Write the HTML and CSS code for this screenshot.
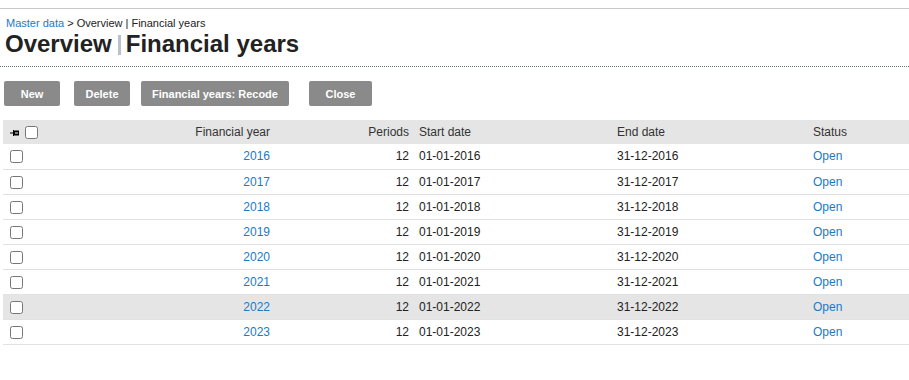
FILE: index.html
```html
<!DOCTYPE html>
<html lang="en">
<head>
<meta charset="utf-8">
<title>Overview | Financial years</title>
<link rel="stylesheet" href="styles.css">
</head>
<body>
<div class="topline"></div>
<header class="page-head">
  <div class="crumbs"><a href="#">Master data</a> &gt; Overview | Financial years</div>
  <h1 class="title">Overview<span class="sep"></span>Financial years</h1>
</header>
<div class="toolbar">
  <button class="btn btn-new">New</button>
  <button class="btn btn-delete">Delete</button>
  <button class="btn btn-recode">Financial years: Recode</button>
  <button class="btn btn-close">Close</button>
</div>
<table class="grid">
  <colgroup>
    <col class="c-check">
    <col class="c-year">
    <col class="c-periods">
    <col class="c-start">
    <col class="c-end">
    <col class="c-status">
  </colgroup>
  <thead>
    <tr>
      <th class="check"><svg class="pin" width="9" height="8" viewBox="0 0 9 8"><path d="M0 4h3M3.5 1v6" stroke="#000" stroke-width="1" fill="none"/><rect x="4" y="1.5" width="5" height="5" fill="#000"/><rect x="5" y="3.5" width="3" height="1" fill="#fff"/></svg><input type="checkbox" class="cb"></th>
      <th class="num">Financial year</th>
      <th class="num">Periods</th>
      <th>Start date</th>
      <th>End date</th>
      <th>Status</th>
    </tr>
  </thead>
  <tbody>
    <tr><td class="check"><input type="checkbox" class="cb"></td><td class="num"><a href="#">2016</a></td><td class="num">12</td><td>01-01-2016</td><td>31-12-2016</td><td><a href="#">Open</a></td></tr>
    <tr><td class="check"><input type="checkbox" class="cb"></td><td class="num"><a href="#">2017</a></td><td class="num">12</td><td>01-01-2017</td><td>31-12-2017</td><td><a href="#">Open</a></td></tr>
    <tr><td class="check"><input type="checkbox" class="cb"></td><td class="num"><a href="#">2018</a></td><td class="num">12</td><td>01-01-2018</td><td>31-12-2018</td><td><a href="#">Open</a></td></tr>
    <tr><td class="check"><input type="checkbox" class="cb"></td><td class="num"><a href="#">2019</a></td><td class="num">12</td><td>01-01-2019</td><td>31-12-2019</td><td><a href="#">Open</a></td></tr>
    <tr><td class="check"><input type="checkbox" class="cb"></td><td class="num"><a href="#">2020</a></td><td class="num">12</td><td>01-01-2020</td><td>31-12-2020</td><td><a href="#">Open</a></td></tr>
    <tr><td class="check"><input type="checkbox" class="cb"></td><td class="num"><a href="#">2021</a></td><td class="num">12</td><td>01-01-2021</td><td>31-12-2021</td><td><a href="#">Open</a></td></tr>
    <tr class="hover"><td class="check"><input type="checkbox" class="cb"></td><td class="num"><a href="#">2022</a></td><td class="num">12</td><td>01-01-2022</td><td>31-12-2022</td><td><a href="#">Open</a></td></tr>
    <tr><td class="check"><input type="checkbox" class="cb"></td><td class="num"><a href="#">2023</a></td><td class="num">12</td><td>01-01-2023</td><td>31-12-2023</td><td><a href="#">Open</a></td></tr>
  </tbody>
</table>
</body>
</html>
```
FILE: styles.css
```css
* { box-sizing: border-box; }
html, body { margin: 0; padding: 0; background: #fff; }
body {
  padding-top: 8px;
  font-family: "Liberation Sans", Arial, sans-serif;
  font-size: 12px;
  color: #222;
}
a { color: #1b7ac6; text-decoration: none; }

.topline { border-top: 1px solid #c9c9c9; }

.page-head {
  margin-top: 8px;
  padding: 0 0 8px 5px;
  border-bottom: 1px dotted #66727e;
}
.crumbs {
  font-size: 11px;
  line-height: 13px;
  padding-left: 1px;
  color: #222;
}
.title {
  margin: 0;
  font-size: 24px;
  line-height: 28px;
  font-weight: bold;
  color: #222;
}
.sep {
  display: inline-block;
  width: 3px;
  height: 20px;
  background: #b9c1c9;
  margin: 0 5px 0 6px;
  vertical-align: -3px;
}

.toolbar {
  display: flex;
  margin-top: 14px;
  padding-left: 4px;
}
.btn {
  height: 25px;
  padding: 0;
  border: 0;
  border-radius: 2px;
  background: #8a8a8a;
  color: #fff;
  font-family: "Liberation Sans", Arial, sans-serif;
  font-size: 11px;
  font-weight: bold;
  text-align: center;
}
.btn-new { width: 56px; }
.btn-delete { width: 56px; margin-left: 14px; }
.btn-recode { width: 148px; margin-left: 11px; }
.btn-close { width: 63px; margin-left: 20px; }

.grid {
  margin: 14px 0 0 3px;
  width: 906px;
  table-layout: fixed;
  border-collapse: collapse;
}
.c-check { width: 47px; }
.c-year { width: 225px; }
.c-periods { width: 139px; }
.c-start { width: 198px; }
.c-end { width: 196px; }
.c-status { width: 101px; }

.grid th {
  background: #e5e5e5;
  height: 24px;
  padding: 0 5px;
  font-weight: normal;
  color: #333;
  text-align: left;
}
.grid td {
  height: 25px;
  padding: 0 5px;
  border-bottom: 1px solid #e2e2e2;
  color: #222;
}
.grid .num { text-align: right; }
.grid .check { padding-left: 7px; }
.grid tr.hover td { background: #e5e5e5; }

.cb {
  width: 13px;
  height: 13px;
  margin: 0;
  vertical-align: middle;
}
.pin {
  vertical-align: middle;
  margin-right: 6px;
}
```
